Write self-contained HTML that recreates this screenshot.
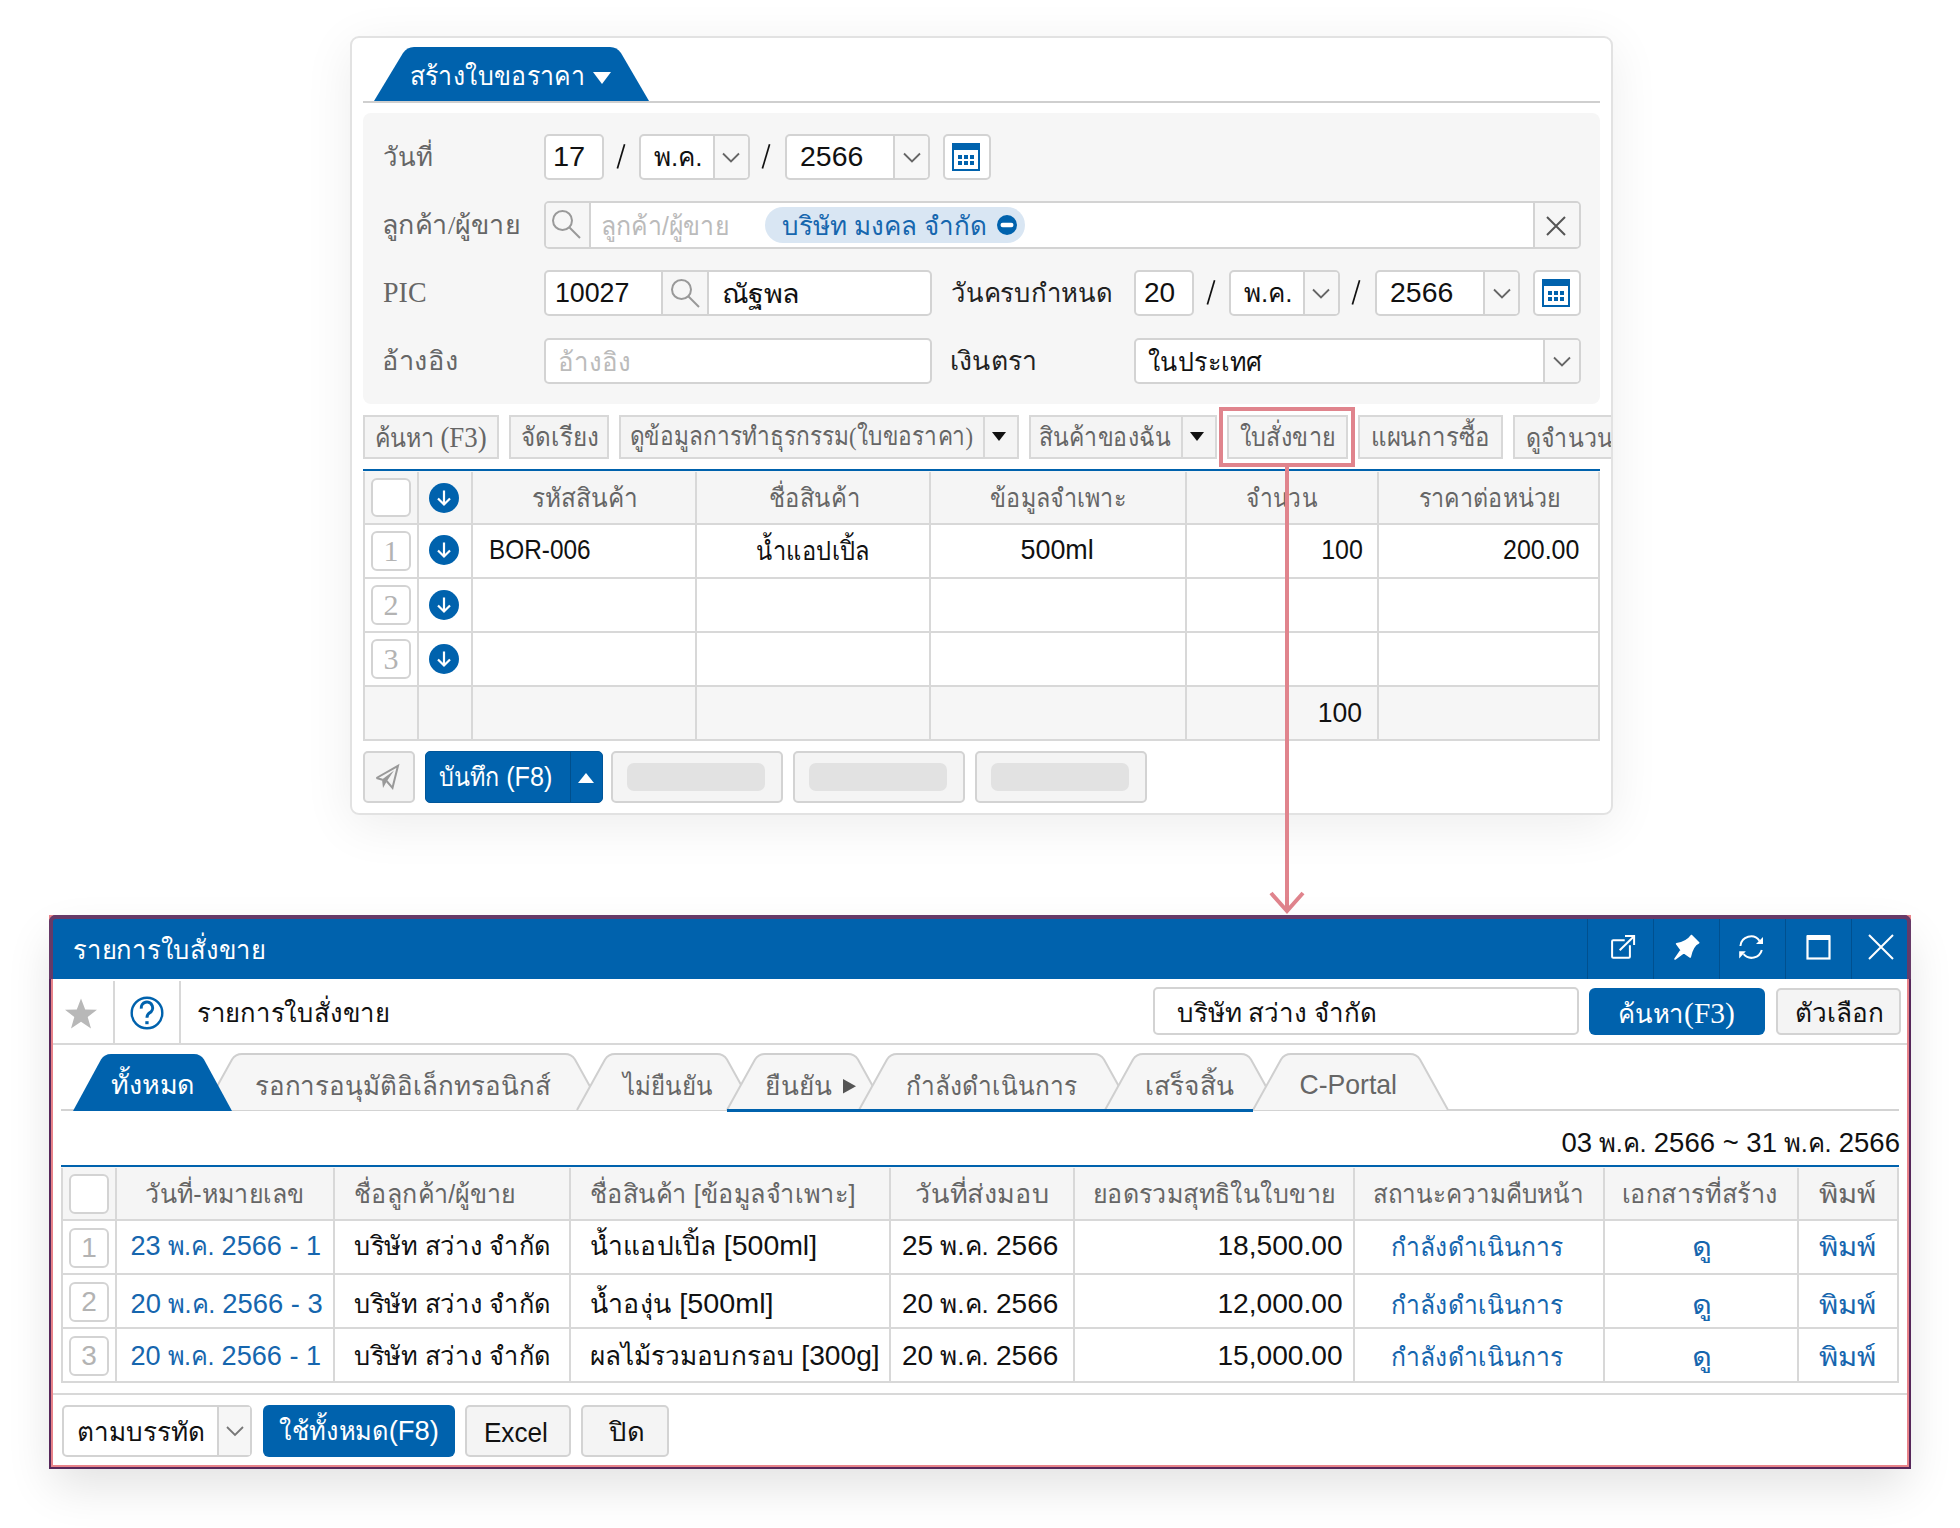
<!DOCTYPE html>
<html><head><meta charset="utf-8">
<style>
html,body{margin:0;padding:0;width:1960px;height:1528px;overflow:hidden;background:#fff;}
body{font-family:"Liberation Sans",sans-serif;font-size:26px;color:#111;position:relative;}
.a{position:absolute;box-sizing:border-box;}
.t{position:absolute;white-space:nowrap;line-height:40px;}
.L{font-size:28px;}
.s .L{font-size:30px;}
</style></head><body>
<div class="a" style="left:350px;top:36px;width:1263px;height:779px;background:#fff;border:2px solid #e2e2e2;border-radius:9px;box-shadow:0 10px 50px rgba(0,0,0,0.075);"></div>
<svg class="a" style="left:0px;top:0px" width="1960" height="120"><path d="M374,101 L403,53 Q407,47 414,47 L610,47 Q617,47 621,53 L649,101 Z" fill="#0062ad"/><rect x="363" y="101" width="1237" height="2" fill="#cfcfcf"/><path d="M593,72 L611,72 L602,84 Z" fill="#fff"/></svg>
<div class="t" id="t1" style="left:409px;top:56px;color:#fff;transform:translateX(0.70px) scaleX(0.9572);transform-origin:1.00px 50%;">สร้างใบขอราคา</div>
<div class="a" style="left:363px;top:113px;width:1237px;height:291px;background:#f6f6f6;border-radius:8px;"></div>
<div class="t s" id="t2" style="left:384px;top:138px;color:#666;font-family:'Liberation Serif',serif;transform:translateX(-1.00px) scaleX(0.9917);transform-origin:1.00px 50%;">วันที่</div>
<div class="t s" id="t3" style="left:384px;top:206px;color:#666;font-family:'Liberation Serif',serif;transform:translateX(-2.00px) scaleX(1.0308);transform-origin:2.00px 50%;">ลูกค้า/ผู้ขาย</div>
<div class="t s" id="t4" style="left:384px;top:272px;color:#666;font-family:'Liberation Serif',serif;transform:translateX(-1.00px) scaleX(0.9311);transform-origin:1.00px 50%;"><span class="L">PIC</span></div>
<div class="t s" id="t5" style="left:384px;top:342px;color:#666;font-family:'Liberation Serif',serif;transform:translateX(-2.00px) scaleX(1.0435);transform-origin:2.00px 50%;">อ้างอิง</div>
<div class="t s" id="t6" style="left:952px;top:274px;color:#222;font-family:'Liberation Serif',serif;transform:translateX(-1.00px) scaleX(0.9857);transform-origin:1.00px 50%;">วันครบกำหนด</div>
<div class="t s" id="t7" style="left:952px;top:342px;color:#222;font-family:'Liberation Serif',serif;transform:translateX(-2.00px) scaleX(1.0207);transform-origin:2.00px 50%;">เงินตรา</div>
<div class="a" style="left:544px;top:134px;width:60px;height:46px;background:#fff;border:2px solid #d3d3d3;border-radius:5px;"></div>
<div class="t" id="t8" style="left:555px;top:137px;color:#111;transform:translateX(-2.00px) scaleX(1.0357);transform-origin:2.00px 50%;"><span class="L">17</span></div>
<svg class="a" style="left:616px;top:142px" width="14" height="30"><path d="M8.6,2.2 L1.4,26.6" stroke="#111" stroke-width="1.7"/></svg>
<div class="a" style="left:639px;top:134px;width:111px;height:46px;background:#fff;border:2px solid #d3d3d3;border-radius:5px;"></div>
<div class="a" style="left:715px;top:136px;width:33px;height:42px;background:#f7f7f7;border-radius:0 3px 3px 0;"></div>
<div class="a" style="left:713px;top:136px;width:2px;height:42px;background:#d3d3d3;"></div>
<div class="t" id="t9" style="left:651px;top:137px;color:#111;transform:translateX(3.00px) scaleX(1.0000);transform-origin:0.00px 50%;">พ.ค.</div>
<svg class="a" style="left:721px;top:149px" width="22" height="18"><path d="M2,4.5 L10,12.5 L18,4.5" fill="none" stroke="#666" stroke-width="1.8"/></svg>
<svg class="a" style="left:761px;top:142px" width="14" height="30"><path d="M8.6,2.2 L1.4,26.6" stroke="#111" stroke-width="1.7"/></svg>
<div class="a" style="left:785px;top:134px;width:145px;height:46px;background:#fff;border:2px solid #d3d3d3;border-radius:5px;"></div>
<div class="a" style="left:895px;top:136px;width:33px;height:42px;background:#f7f7f7;border-radius:0 3px 3px 0;"></div>
<div class="a" style="left:893px;top:136px;width:2px;height:42px;background:#d3d3d3;"></div>
<div class="t" id="t10" style="left:800px;top:137px;color:#111;transform:translateX(0.00px) scaleX(1.0164);transform-origin:1.00px 50%;"><span class="L">2566</span></div>
<svg class="a" style="left:902px;top:149px" width="22" height="18"><path d="M2,4.5 L10,12.5 L18,4.5" fill="none" stroke="#666" stroke-width="1.8"/></svg>
<div class="a" style="left:943px;top:134px;width:48px;height:46px;background:#fff;border:2px solid #d3d3d3;border-radius:5px;"></div>
<svg class="a" style="left:952px;top:143px" width="28" height="28"><rect x="1" y="1" width="26" height="26" fill="none" stroke="#0062ad" stroke-width="2"/><rect x="1" y="1" width="26" height="6" fill="#0062ad"/><rect x="6" y="12" width="4" height="4" fill="#0062ad"/><rect x="12" y="12" width="4" height="4" fill="#0062ad"/><rect x="18" y="12" width="4" height="4" fill="#0062ad"/><rect x="6" y="18" width="4" height="4" fill="#0062ad"/><rect x="12" y="18" width="4" height="4" fill="#0062ad"/><rect x="18" y="18" width="4" height="4" fill="#0062ad"/></svg>
<div class="a" style="left:544px;top:201px;width:1037px;height:48px;background:#fff;border:2px solid #d3d3d3;border-radius:5px;"></div>
<div class="a" style="left:546px;top:203px;width:44px;height:44px;background:#f6f6f6;border-radius:3px 0 0 3px;"></div>
<div class="a" style="left:589px;top:203px;width:2px;height:44px;background:#d3d3d3;"></div>
<svg class="a" style="left:550px;top:208px" width="36" height="36"><circle cx="12.5" cy="12.5" r="9.5" fill="none" stroke="#999" stroke-width="2"/><path d="M19.5,19.5 L30,30" stroke="#999" stroke-width="2"/></svg>
<div class="t" id="t11" style="left:602px;top:206px;color:#bbb;transform:translateX(-1.20px) scaleX(0.9546);transform-origin:2.00px 50%;">ลูกค้า/ผู้ขาย</div>
<div class="a" style="left:765px;top:207px;width:260px;height:36px;background:#d9e6f3;border-radius:18px;"></div>
<div class="t" id="t12" style="left:783px;top:206px;color:#1666ae;transform:translateX(-1.00px) scaleX(1.0000);transform-origin:1.00px 50%;">บริษัท มงคล จำกัด</div>
<svg class="a" style="left:995px;top:213px" width="24" height="24"><circle cx="12" cy="12" r="10" fill="#0062ad"/><rect x="5.5" y="9.8" width="13" height="4.4" rx="2.2" fill="#fff"/></svg>
<div class="a" style="left:1533px;top:203px;width:2px;height:44px;background:#d3d3d3;"></div>
<div class="a" style="left:1535px;top:203px;width:44px;height:44px;background:#f6f6f6;border-radius:0 3px 3px 0;"></div>
<svg class="a" style="left:1545px;top:215px" width="22" height="22"><path d="M2,2 L20,20 M20,2 L2,20" stroke="#555" stroke-width="2"/></svg>
<div class="a" style="left:544px;top:270px;width:388px;height:46px;background:#fff;border:2px solid #d3d3d3;border-radius:5px;"></div>
<div class="a" style="left:662px;top:272px;width:46px;height:42px;background:#f6f6f6;"></div>
<div class="a" style="left:661px;top:272px;width:2px;height:42px;background:#d3d3d3;"></div>
<div class="a" style="left:707px;top:272px;width:2px;height:42px;background:#d3d3d3;"></div>
<svg class="a" style="left:669px;top:277px" width="36" height="36"><circle cx="12.5" cy="12.5" r="9.5" fill="none" stroke="#999" stroke-width="2"/><path d="M19.5,19.5 L30,30" stroke="#999" stroke-width="2"/></svg>
<div class="t" id="t13" style="left:556px;top:273px;color:#111;transform:translateX(-1.20px) scaleX(0.9573);transform-origin:2.00px 50%;"><span class="L">10027</span></div>
<div class="t" id="t14" style="left:724px;top:274px;color:#111;transform:translateX(-2.10px) scaleX(1.1030);transform-origin:2.00px 50%;">ณัฐพล</div>
<div class="a" style="left:1134px;top:270px;width:60px;height:46px;background:#fff;border:2px solid #d3d3d3;border-radius:5px;"></div>
<div class="t" id="t15" style="left:1145px;top:273px;color:#111;transform:translateX(-1.00px) scaleX(1.0000);transform-origin:1.00px 50%;"><span class="L">20</span></div>
<svg class="a" style="left:1206px;top:278px" width="14" height="30"><path d="M8.6,2.2 L1.4,26.6" stroke="#111" stroke-width="1.7"/></svg>
<div class="a" style="left:1229px;top:270px;width:111px;height:46px;background:#fff;border:2px solid #d3d3d3;border-radius:5px;"></div>
<div class="a" style="left:1305px;top:272px;width:33px;height:42px;background:#f7f7f7;border-radius:0 3px 3px 0;"></div>
<div class="a" style="left:1303px;top:272px;width:2px;height:42px;background:#d3d3d3;"></div>
<div class="t" id="t16" style="left:1241px;top:273px;color:#111;transform:translateX(3.00px) scaleX(1.0000);transform-origin:0.00px 50%;">พ.ค.</div>
<svg class="a" style="left:1311px;top:285px" width="22" height="18"><path d="M2,4.5 L10,12.5 L18,4.5" fill="none" stroke="#666" stroke-width="1.8"/></svg>
<svg class="a" style="left:1351px;top:278px" width="14" height="30"><path d="M8.6,2.2 L1.4,26.6" stroke="#111" stroke-width="1.7"/></svg>
<div class="a" style="left:1375px;top:270px;width:145px;height:46px;background:#fff;border:2px solid #d3d3d3;border-radius:5px;"></div>
<div class="a" style="left:1485px;top:272px;width:33px;height:42px;background:#f7f7f7;border-radius:0 3px 3px 0;"></div>
<div class="a" style="left:1483px;top:272px;width:2px;height:42px;background:#d3d3d3;"></div>
<div class="t" id="t17" style="left:1390px;top:273px;color:#111;transform:translateX(0.00px) scaleX(1.0164);transform-origin:1.00px 50%;"><span class="L">2566</span></div>
<svg class="a" style="left:1492px;top:285px" width="22" height="18"><path d="M2,4.5 L10,12.5 L18,4.5" fill="none" stroke="#666" stroke-width="1.8"/></svg>
<div class="a" style="left:1533px;top:270px;width:48px;height:46px;background:#fff;border:2px solid #d3d3d3;border-radius:5px;"></div>
<svg class="a" style="left:1542px;top:279px" width="28" height="28"><rect x="1" y="1" width="26" height="26" fill="none" stroke="#0062ad" stroke-width="2"/><rect x="1" y="1" width="26" height="6" fill="#0062ad"/><rect x="6" y="12" width="4" height="4" fill="#0062ad"/><rect x="12" y="12" width="4" height="4" fill="#0062ad"/><rect x="18" y="12" width="4" height="4" fill="#0062ad"/><rect x="6" y="18" width="4" height="4" fill="#0062ad"/><rect x="12" y="18" width="4" height="4" fill="#0062ad"/><rect x="18" y="18" width="4" height="4" fill="#0062ad"/></svg>
<div class="a" style="left:544px;top:338px;width:388px;height:46px;background:#fff;border:2px solid #d3d3d3;border-radius:5px;"></div>
<div class="t" id="t18" style="left:560px;top:342px;color:#bbb;transform:translateX(-2.00px) scaleX(0.9942);transform-origin:2.00px 50%;">อ้างอิง</div>
<div class="a" style="left:1134px;top:338px;width:447px;height:46px;background:#fff;border:2px solid #d3d3d3;border-radius:5px;"></div>
<div class="a" style="left:1545px;top:340px;width:34px;height:42px;background:#f7f7f7;border-radius:0 3px 3px 0;"></div>
<div class="a" style="left:1543px;top:340px;width:2px;height:42px;background:#d3d3d3;"></div>
<div class="t" id="t19" style="left:1149px;top:342px;color:#111;transform:translateX(-1.20px) scaleX(0.9641);transform-origin:1.00px 50%;">ในประเทศ</div>
<svg class="a" style="left:1552px;top:353px" width="22" height="18"><path d="M2,4.5 L10,12.5 L18,4.5" fill="none" stroke="#666" stroke-width="1.8"/></svg>
<div class="a" style="left:363px;top:415px;width:136px;height:44px;background:#f4f4f4;border:2px solid #d8d8d8;border-radius:0px;"></div>
<div class="t s" id="t20" style="left:376px;top:417px;color:#666;font-family:'Liberation Serif',serif;transform:translateX(-1.60px) scaleX(0.8951);transform-origin:2.00px 50%;">ค้นหา <span class="L">(F3)</span></div>
<div class="a" style="left:509px;top:415px;width:100px;height:44px;background:#f4f4f4;border:2px solid #d8d8d8;border-radius:0px;"></div>
<div class="t s" id="t21" style="left:522px;top:418px;color:#666;font-family:'Liberation Serif',serif;transform:translateX(-0.70px) scaleX(0.9313);transform-origin:1.00px 50%;">จัดเรียง</div>
<div class="a" style="left:619px;top:415px;width:400px;height:44px;background:#f4f4f4;border:2px solid #d8d8d8;border-radius:0px;"></div>
<div class="t s" id="t22" style="left:630px;top:417px;color:#666;font-family:'Liberation Serif',serif;transform:translateX(-0.50px) scaleX(0.8707);transform-origin:1.00px 50%;">ดูข้อมูลการทำธุรกรรม(ใบขอราคา)</div>
<div class="a" style="left:983px;top:417px;width:2px;height:40px;background:#d8d8d8;"></div>
<svg class="a" style="left:992px;top:432px" width="16" height="10"><path d="M0,0 L14,0 L7,9 Z" fill="#111"/></svg>
<div class="a" style="left:1029px;top:415px;width:188px;height:44px;background:#f4f4f4;border:2px solid #d8d8d8;border-radius:0px;"></div>
<div class="t s" id="t23" style="left:1040px;top:418px;color:#666;font-family:'Liberation Serif',serif;transform:translateX(-1.00px) scaleX(0.8851);transform-origin:1.00px 50%;">สินค้าของฉัน</div>
<div class="a" style="left:1181px;top:417px;width:2px;height:40px;background:#d8d8d8;"></div>
<svg class="a" style="left:1190px;top:432px" width="16" height="10"><path d="M0,0 L14,0 L7,9 Z" fill="#111"/></svg>
<div class="a" style="left:1227px;top:415px;width:121px;height:44px;background:#f4f4f4;border:2px solid #d8d8d8;border-radius:0px;"></div>
<div class="t s" id="t24" style="left:1240px;top:418px;color:#666;font-family:'Liberation Serif',serif;transform:translateX(-0.50px) scaleX(0.8952);transform-origin:1.00px 50%;">ใบสั่งขาย</div>
<div class="a" style="left:1358px;top:415px;width:145px;height:44px;background:#f4f4f4;border:2px solid #d8d8d8;border-radius:0px;"></div>
<div class="t s" id="t25" style="left:1372px;top:418px;color:#666;font-family:'Liberation Serif',serif;transform:translateX(-1.20px) scaleX(0.9216);transform-origin:2.00px 50%;">แผนการซื้อ</div>
<div class="a" style="left:1513px;top:415px;width:98px;height:44px;overflow:hidden;">
<div class="a" style="left:0;top:0;width:140px;height:44px;background:#f4f4f4;border:2px solid #d8d8d8;"></div>
<div class="t" style="left:13px;top:4px;color:#666;font-family:'Liberation Serif',serif;transform:scaleX(0.89);transform-origin:0 50%;">ดูจำนวน</div>
</div>
<div class="a" style="left:1219px;top:407px;width:136px;height:60px;border:4px solid #e0848d;"></div>
<div class="a" style="left:363px;top:469px;width:1237px;height:2px;background:#0062ad;"></div>
<div class="a" style="left:363px;top:471px;width:1237px;height:53px;background:#f5f5f5;"></div>
<div class="a" style="left:363px;top:686px;width:1237px;height:54px;background:#f6f6f6;"></div>
<div class="a" style="left:363px;top:523px;width:1237px;height:2px;background:#d8d8d8;"></div>
<div class="a" style="left:363px;top:577px;width:1237px;height:2px;background:#d8d8d8;"></div>
<div class="a" style="left:363px;top:631px;width:1237px;height:2px;background:#d8d8d8;"></div>
<div class="a" style="left:363px;top:685px;width:1237px;height:2px;background:#d8d8d8;"></div>
<div class="a" style="left:363px;top:739px;width:1237px;height:2px;background:#d8d8d8;"></div>
<div class="a" style="left:363px;top:472px;width:2px;height:269px;background:#d8d8d8;"></div>
<div class="a" style="left:417px;top:472px;width:2px;height:269px;background:#d8d8d8;"></div>
<div class="a" style="left:471px;top:472px;width:2px;height:269px;background:#d8d8d8;"></div>
<div class="a" style="left:695px;top:472px;width:2px;height:269px;background:#d8d8d8;"></div>
<div class="a" style="left:929px;top:472px;width:2px;height:269px;background:#d8d8d8;"></div>
<div class="a" style="left:1185px;top:472px;width:2px;height:269px;background:#d8d8d8;"></div>
<div class="a" style="left:1377px;top:472px;width:2px;height:269px;background:#d8d8d8;"></div>
<div class="a" style="left:1598px;top:472px;width:2px;height:269px;background:#d8d8d8;"></div>
<div class="a" style="left:371px;top:478px;width:40px;height:39px;background:#fff;border:2px solid #d3d3d3;border-radius:6px;"></div>
<div class="a" style="left:371px;top:531px;width:40px;height:40px;background:#fff;border:2px solid #d3d3d3;border-radius:6px;"></div>
<div class="t s" id="t26" style="left:371px;width:40px;text-align:center;top:531px;color:#b3b3b3;font-family:'Liberation Serif',serif;"><span class="L">1</span></div>
<div class="a" style="left:371px;top:585px;width:40px;height:40px;background:#fff;border:2px solid #d3d3d3;border-radius:6px;"></div>
<div class="t s" id="t27" style="left:371px;width:40px;text-align:center;top:585px;color:#b3b3b3;font-family:'Liberation Serif',serif;"><span class="L">2</span></div>
<div class="a" style="left:371px;top:639px;width:40px;height:40px;background:#fff;border:2px solid #d3d3d3;border-radius:6px;"></div>
<div class="t s" id="t28" style="left:371px;width:40px;text-align:center;top:639px;color:#b3b3b3;font-family:'Liberation Serif',serif;"><span class="L">3</span></div>
<svg class="a" style="left:429px;top:483px" width="30" height="30"><circle cx="15" cy="15" r="15" fill="#0062ad"/><path d="M15,7.5 L15,21.5 M9,15.5 L15,21.5 L21,15.5" fill="none" stroke="#fff" stroke-width="2.2"/></svg>
<svg class="a" style="left:429px;top:535px" width="30" height="30"><circle cx="15" cy="15" r="15" fill="#0062ad"/><path d="M15,7.5 L15,21.5 M9,15.5 L15,21.5 L21,15.5" fill="none" stroke="#fff" stroke-width="2.2"/></svg>
<svg class="a" style="left:429px;top:590px" width="30" height="30"><circle cx="15" cy="15" r="15" fill="#0062ad"/><path d="M15,7.5 L15,21.5 M9,15.5 L15,21.5 L21,15.5" fill="none" stroke="#fff" stroke-width="2.2"/></svg>
<svg class="a" style="left:429px;top:644px" width="30" height="30"><circle cx="15" cy="15" r="15" fill="#0062ad"/><path d="M15,7.5 L15,21.5 M9,15.5 L15,21.5 L21,15.5" fill="none" stroke="#fff" stroke-width="2.2"/></svg>
<div class="t s" id="t29" style="left:473px;width:222px;text-align:center;top:479px;color:#666;font-family:'Liberation Serif',serif;transform:translateX(4.60px) scaleX(0.9364);transform-origin:56.00px 50%;">รหัสสินค้า</div>
<div class="t s" id="t30" style="left:697px;width:232px;text-align:center;top:479px;color:#666;font-family:'Liberation Serif',serif;transform:translateX(5.60px) scaleX(0.9155);transform-origin:67.00px 50%;">ชื่อสินค้า</div>
<div class="t s" id="t31" style="left:931px;width:254px;text-align:center;top:479px;color:#666;font-family:'Liberation Serif',serif;transform:translateX(8.00px) scaleX(0.8973);transform-origin:52.00px 50%;">ข้อมูลจำเพาะ</div>
<div class="t s" id="t32" style="left:1187px;width:190px;text-align:center;top:479px;color:#666;font-family:'Liberation Serif',serif;transform:translateX(4.80px) scaleX(0.8738);transform-origin:56.00px 50%;">จำนวน</div>
<div class="t s" id="t33" style="left:1379px;width:219px;text-align:center;top:479px;color:#666;font-family:'Liberation Serif',serif;transform:translateX(9.40px) scaleX(0.8949);transform-origin:31.00px 50%;">ราคาต่อหน่วย</div>
<div class="t" id="t34" style="left:490px;top:530px;color:#111;transform:translateX(-1.30px) scaleX(0.8711);transform-origin:2.00px 50%;"><span class="L">BOR-006</span></div>
<div class="t" id="t35" style="left:697px;width:232px;text-align:center;top:531px;color:#111;transform:translateX(5.60px) scaleX(0.9098);transform-origin:55.00px 50%;">น้ำแอปเปิ้ล</div>
<div class="t" id="t36" style="left:931px;width:254px;text-align:center;top:530px;color:#111;transform:translateX(0.60px) scaleX(0.9595);transform-origin:90.00px 50%;"><span class="L">500ml</span></div>
<div class="t" id="t37" style="left:1187px;width:176px;text-align:right;top:530px;color:#111;transform:translateX(4.70px) scaleX(0.8932);transform-origin:131.00px 50%;"><span class="L">100</span></div>
<div class="t" id="t38" style="left:1379px;width:200px;text-align:right;top:530px;color:#111;transform:translateX(9.60px) scaleX(0.8917);transform-origin:115.00px 50%;"><span class="L">200.00</span></div>
<div class="t" id="t39" style="left:1187px;width:176px;text-align:right;top:693px;color:#111;transform:translateX(1.30px) scaleX(0.9477);transform-origin:131.00px 50%;"><span class="L">100</span></div>
<div class="a" style="left:363px;top:751px;width:52px;height:52px;background:#f4f4f4;border:2px solid #d3d3d3;border-radius:5px;"></div>
<svg class="a" style="left:375px;top:763px" width="28" height="28"><path d="M1.5,15 L23,2.8 L17.5,24.8 L11.6,18" fill="none" stroke="#999" stroke-width="2"/><path d="M1.5,15 L7.5,16.8" stroke="#999" stroke-width="2"/><path d="M7,16.5 L19,7.5 L11.8,18.2 L8,25 Z" fill="#999"/></svg>
<div class="a" style="left:425px;top:751px;width:178px;height:52px;background:#0062ad;border:1px solid #00569a;border-radius:5px;"></div>
<div class="a" style="left:570px;top:752px;width:1px;height:50px;background:#004f8c;"></div>
<div class="t" id="t40" style="left:439px;top:757px;color:#fff;transform:translateX(-0.50px) scaleX(0.8984);transform-origin:1.00px 50%;">บันทึก <span class="L">(F8)</span></div>
<svg class="a" style="left:577px;top:771px" width="18" height="14"><path d="M1,12 L9,2 L17,12 Z" fill="#fff"/></svg>
<div class="a" style="left:611px;top:751px;width:172px;height:52px;background:#f4f4f4;border:2px solid #d3d3d3;border-radius:5px;"></div>
<div class="a" style="left:627px;top:763px;width:138px;height:28px;background:#e2e2e2;border-radius:7px;"></div>
<div class="a" style="left:793px;top:751px;width:172px;height:52px;background:#f4f4f4;border:2px solid #d3d3d3;border-radius:5px;"></div>
<div class="a" style="left:809px;top:763px;width:138px;height:28px;background:#e2e2e2;border-radius:7px;"></div>
<div class="a" style="left:975px;top:751px;width:172px;height:52px;background:#f4f4f4;border:2px solid #d3d3d3;border-radius:5px;"></div>
<div class="a" style="left:991px;top:763px;width:138px;height:28px;background:#e2e2e2;border-radius:7px;"></div>
<svg class="a" style="left:1260px;top:466px" width="60" height="452"><path d="M27,0 L27,446" stroke="#e0848d" stroke-width="4"/><path d="M11,427 L27,445 L43,427" fill="none" stroke="#e0848d" stroke-width="4"/></svg>
<div class="a" style="left:49px;top:915px;width:1862px;height:554px;background:#fff;box-shadow:0 20px 44px -4px rgba(0,0,0,0.12);"></div>
<div class="a" style="left:49px;top:915px;width:1862px;height:554px;background:transparent;border:4px solid #e8838a;"></div>
<div class="a" style="left:49px;top:915px;width:1862px;height:554px;background:transparent;border:2px solid #56275a;border-radius:7px 7px 0 0;"></div>
<div class="a" style="left:49px;top:915px;width:1862px;height:64px;background:#0062ad;border:4px solid #663a68;border-bottom:none;border-radius:7px 7px 0 0;"></div>
<div class="t" id="t41" style="left:74px;top:930px;color:#fff;transform:translateX(-1.00px) scaleX(0.9834);transform-origin:1.00px 50%;">รายการใบสั่งขาย</div>
<div class="a" style="left:1587px;top:919px;width:1px;height:60px;background:#00508f;"></div>
<div class="a" style="left:1653px;top:919px;width:1px;height:60px;background:#00508f;"></div>
<div class="a" style="left:1719px;top:919px;width:1px;height:60px;background:#00508f;"></div>
<div class="a" style="left:1785px;top:919px;width:1px;height:60px;background:#00508f;"></div>
<div class="a" style="left:1851px;top:919px;width:1px;height:60px;background:#00508f;"></div>
<svg class="a" style="left:1600px;top:925px" width="300" height="44">
  <path d="M24.7,15.2 L13.2,15.2 Q12.1,15.2 12.1,16.3 L12.1,31.7 Q12.1,32.8 13.2,32.8 L28.8,32.8 Q29.9,32.8 29.9,31.7 L29.9,20.3" fill="none" stroke="#fff" stroke-width="2"/>
  <path d="M19.7,25.3 L33.3,12" fill="none" stroke="#fff" stroke-width="2"/>
  <path d="M25,11 L34.1,11 L34.1,20" fill="none" stroke="#fff" stroke-width="2"/>
  <g transform="translate(64,0)">
    <path d="M27.5,10.5 L34.7,17.7 Q28.5,20.5 26.2,32 L19.8,27.6 L11,34 L17.2,25 L12.6,18.8 Q22.5,17.5 27.5,10.5 Z" fill="#fff" stroke="#fff" stroke-width="1.6" stroke-linejoin="round"/>
    <path d="M11,34 L19.8,27.6 L17.2,25 Z" fill="#fff"/>
  </g>
  <g transform="translate(130,0)">
    <path d="M10.4,21 A10.6,10.6 0 0 1 29.5,15.8" fill="none" stroke="#fff" stroke-width="2"/>
    <path d="M33,12 L33,19.1 L26,19.1 Z" fill="#fff"/>
    <path d="M31.8,25 A10.6,10.6 0 0 1 13.6,29.2" fill="none" stroke="#fff" stroke-width="2"/>
    <path d="M9.2,26.2 L15.8,26.2 L9.2,33.6 Z" fill="#fff"/>
  </g>
  <g transform="translate(196,0)">
    <rect x="11.5" y="11.5" width="22" height="22" fill="none" stroke="#fff" stroke-width="2.2"/>
    <rect x="11" y="10" width="23" height="5" fill="#fff"/>
  </g>
  <g transform="translate(258,0)">
    <path d="M11,10 L35,34 M35,10 L11,34" stroke="#fff" stroke-width="2"/>
  </g></svg>
<div class="a" style="left:113px;top:981px;width:2px;height:63px;background:#d8d8d8;"></div>
<div class="a" style="left:179px;top:981px;width:2px;height:63px;background:#d8d8d8;"></div>
<div class="a" style="left:53px;top:1043px;width:1854px;height:2px;background:#d8d8d8;"></div>
<svg class="a" style="left:64px;top:997px" width="34" height="34"><path d="M17,1.5 L21.2,12.5 L33,12.8 L23.7,20 L27,31.5 L17,24.8 L7,31.5 L10.3,20 L1,12.8 L12.8,12.5 Z" fill="#b8b8b8"/></svg>
<svg class="a" style="left:129px;top:995px" width="36" height="36"><circle cx="18" cy="18" r="15.3" fill="none" stroke="#0062ad" stroke-width="2.4"/><path d="M12.3,13.6 A5.7,5.7 0 1 1 20.6,17.8 Q18,19.5 18,22.8" fill="none" stroke="#0062ad" stroke-width="3"/><rect x="16.3" y="26.2" width="3.3" height="3" fill="#0062ad"/></svg>
<div class="t s" id="t42" style="left:197px;top:994px;color:#111;font-family:'Liberation Serif',serif;transform:translateX(-0.30px) scaleX(0.9855);transform-origin:1.00px 50%;">รายการใบสั่งขาย</div>
<div class="a" style="left:1153px;top:987px;width:426px;height:48px;background:#fff;border:2px solid #d3d3d3;border-radius:5px;"></div>
<div class="t s" id="t43" style="left:1178px;top:994px;color:#111;font-family:'Liberation Serif',serif;transform:translateX(-1.00px) scaleX(0.9980);transform-origin:1.00px 50%;">บริษัท สว่าง จำกัด</div>
<div class="a" style="left:1589px;top:988px;width:176px;height:47px;background:#0062ad;border-radius:6px;"></div>
<div class="t s" id="t44" style="left:1589px;width:176px;text-align:center;top:993px;color:#fff;font-family:'Liberation Serif',serif;transform:translateX(0.50px) scaleX(0.9835);transform-origin:31.00px 50%;">ค้นหา<span class="L">(F3)</span></div>
<div class="a" style="left:1776px;top:988px;width:125px;height:47px;background:#f4f4f4;border:2px solid #d3d3d3;border-radius:5px;"></div>
<div class="t s" id="t45" style="left:1776px;width:125px;text-align:center;top:994px;color:#111;font-family:'Liberation Serif',serif;transform:translateX(1.00px) scaleX(1.0059);transform-origin:20.00px 50%;">ตัวเลือก</div>
<svg class="a" style="left:0px;top:1040px" width="1960" height="80"><rect x="61" y="69" width="1838" height="2" fill="#d3d3d3"/><path d="M204.0,70 L232.0,19.5 Q235.5,14 242.0,14 L565.0,14 Q571.5,14 575.0,19.5 L603.0,70" fill="#f6f6f6" stroke="#cfcfcf" stroke-width="2"/><path d="M577.0,70 L605.0,19.5 Q608.5,14 615.0,14 L717.0,14 Q723.5,14 727.0,19.5 L755.0,70" fill="#f6f6f6" stroke="#cfcfcf" stroke-width="2"/><path d="M727.0,70 L755.0,19.5 Q758.5,14 765.0,14 L848.0,14 Q854.5,14 858.0,19.5 L886.0,70" fill="#f6f6f6" stroke="#cfcfcf" stroke-width="2"/><path d="M859.0,70 L887.0,19.5 Q890.5,14 897.0,14 L1094.0,14 Q1100.5,14 1104.0,19.5 L1132.0,70" fill="#f6f6f6" stroke="#cfcfcf" stroke-width="2"/><path d="M1105.0,70 L1133.0,19.5 Q1136.5,14 1143.0,14 L1241.0,14 Q1247.5,14 1251.0,19.5 L1279.0,70" fill="#f6f6f6" stroke="#cfcfcf" stroke-width="2"/><path d="M1253.0,70 L1281.0,19.5 Q1284.5,14 1291.0,14 L1410.0,14 Q1416.5,14 1420.0,19.5 L1448.0,70" fill="#f6f6f6" stroke="#cfcfcf" stroke-width="2"/><path d="M73,71 L101,19.5 Q104.5,14 111,14 L194,14 Q200.5,14 204,19.5 L232,71 Z" fill="#0062ad"/><rect x="727" y="69" width="526" height="3" fill="#0062ad"/><path d="M843,39 L856,46.2 L843,53.5 Z" fill="#555"/></svg>
<div class="t" id="t46" style="left:111px;top:1065px;color:#fff;transform:translateX(0.30px) scaleX(1.0342);transform-origin:0.00px 50%;">ทั้งหมด</div>
<div class="t" id="t47" style="left:256px;top:1066px;color:#666;transform:translateX(-1.40px) scaleX(0.9970);transform-origin:1.00px 50%;">รอการอนุมัติอิเล็กทรอนิกส์</div>
<div class="t" id="t48" style="left:621px;top:1066px;color:#666;transform:translateX(2.60px) scaleX(0.9265);transform-origin:-2.00px 50%;">ไม่ยืนยัน</div>
<div class="t" id="t49" style="left:766px;top:1066px;color:#666;transform:translateX(-0.50px) scaleX(1.0046);transform-origin:1.00px 50%;">ยืนยัน</div>
<div class="t" id="t50" style="left:906px;top:1066px;color:#666;transform:translateX(-0.50px) scaleX(0.9420);transform-origin:1.00px 50%;">กำลังดำเนินการ</div>
<div class="t" id="t51" style="left:1147px;top:1066px;color:#666;transform:translateX(-2.00px) scaleX(1.0116);transform-origin:2.00px 50%;">เสร็จสิ้น</div>
<div class="t" id="t52" style="left:1300px;top:1065px;color:#666;transform:translateX(-0.60px) scaleX(0.9500);transform-origin:1.00px 50%;"><span class="L">C-Portal</span></div>
<div class="t" id="t53" style="left:500px;width:1399px;text-align:right;top:1123px;color:#111;transform:translateX(7.00px) scaleX(0.9825);transform-origin:1055.00px 50%;"><span class="L">03</span> พ.ค. <span class="L">2566 ~ 31</span> พ.ค. <span class="L">2566</span></div>
<div class="a" style="left:61px;top:1165px;width:1838px;height:2px;background:#0062ad;"></div>
<div class="a" style="left:61px;top:1167px;width:1838px;height:53px;background:#f5f5f5;"></div>
<div class="a" style="left:61px;top:1219px;width:1838px;height:2px;background:#d8d8d8;"></div>
<div class="a" style="left:61px;top:1273px;width:1838px;height:2px;background:#d8d8d8;"></div>
<div class="a" style="left:61px;top:1327px;width:1838px;height:2px;background:#d8d8d8;"></div>
<div class="a" style="left:61px;top:1381px;width:1838px;height:2px;background:#d8d8d8;"></div>
<div class="a" style="left:61px;top:1168px;width:2px;height:215px;background:#d8d8d8;"></div>
<div class="a" style="left:115px;top:1168px;width:2px;height:215px;background:#d8d8d8;"></div>
<div class="a" style="left:333px;top:1168px;width:2px;height:215px;background:#d8d8d8;"></div>
<div class="a" style="left:569px;top:1168px;width:2px;height:215px;background:#d8d8d8;"></div>
<div class="a" style="left:889px;top:1168px;width:2px;height:215px;background:#d8d8d8;"></div>
<div class="a" style="left:1073px;top:1168px;width:2px;height:215px;background:#d8d8d8;"></div>
<div class="a" style="left:1353px;top:1168px;width:2px;height:215px;background:#d8d8d8;"></div>
<div class="a" style="left:1603px;top:1168px;width:2px;height:215px;background:#d8d8d8;"></div>
<div class="a" style="left:1797px;top:1168px;width:2px;height:215px;background:#d8d8d8;"></div>
<div class="a" style="left:1897px;top:1168px;width:2px;height:215px;background:#d8d8d8;"></div>
<div class="a" style="left:69px;top:1174px;width:40px;height:40px;background:#fff;border:2px solid #d3d3d3;border-radius:6px;"></div>
<div class="a" style="left:69px;top:1228px;width:40px;height:40px;background:#fff;border:2px solid #d3d3d3;border-radius:6px;"></div>
<div class="t" id="t54" style="left:69px;width:40px;text-align:center;top:1228px;color:#b3b3b3;"><span class="L">1</span></div>
<div class="a" style="left:69px;top:1282px;width:40px;height:40px;background:#fff;border:2px solid #d3d3d3;border-radius:6px;"></div>
<div class="t" id="t55" style="left:69px;width:40px;text-align:center;top:1282px;color:#b3b3b3;"><span class="L">2</span></div>
<div class="a" style="left:69px;top:1336px;width:40px;height:40px;background:#fff;border:2px solid #d3d3d3;border-radius:6px;"></div>
<div class="t" id="t56" style="left:69px;width:40px;text-align:center;top:1336px;color:#b3b3b3;"><span class="L">3</span></div>
<div class="t" id="t57" style="left:117px;width:216px;text-align:center;top:1174px;color:#666;transform:translateX(3.00px) scaleX(0.9626);transform-origin:26.00px 50%;">วันที่-หมายเลข</div>
<div class="t" id="t58" style="left:355px;top:1174px;color:#666;transform:translateX(-1.00px) scaleX(0.9618);transform-origin:1.00px 50%;">ชื่อลูกค้า/ผู้ขาย</div>
<div class="t" id="t59" style="left:590px;top:1174px;color:#666;transform:translateX(-0.40px) scaleX(0.9716);transform-origin:1.00px 50%;">ชื่อสินค้า [ข้อมูลจำเพาะ]</div>
<div class="t" id="t60" style="left:891px;width:182px;text-align:center;top:1174px;color:#666;transform:translateX(-2.00px) scaleX(1.0381);transform-origin:28.00px 50%;">วันที่ส่งมอบ</div>
<div class="t" id="t61" style="left:1075px;width:278px;text-align:center;top:1174px;color:#666;transform:translateX(4.70px) scaleX(0.9629);transform-origin:15.00px 50%;">ยอดรวมสุทธิในใบขาย</div>
<div class="t" id="t62" style="left:1355px;width:248px;text-align:center;top:1174px;color:#666;transform:translateX(7.00px) scaleX(0.9312);transform-origin:12.00px 50%;">สถานะความคืบหน้า</div>
<div class="t" id="t63" style="left:1605px;width:192px;text-align:center;top:1174px;color:#666;transform:translateX(1.00px) scaleX(0.9707);transform-origin:18.00px 50%;">เอกสารที่สร้าง</div>
<div class="t" id="t64" style="left:1799px;width:98px;text-align:center;top:1174px;color:#666;transform:translateX(-3.70px) scaleX(1.1240);transform-origin:24.00px 50%;">พิมพ์</div>
<div class="t" id="t65" style="left:131px;top:1226px;color:#1666ae;transform:translateX(-0.60px) scaleX(0.9687);transform-origin:1.00px 50%;"><span class="L">23</span> พ.ค. <span class="L">2566 - 1</span></div>
<div class="t" id="t66" style="left:355px;top:1226px;color:#111;transform:translateX(-0.80px) scaleX(0.9763);transform-origin:1.00px 50%;">บริษัท สว่าง จำกัด</div>
<div class="t" id="t67" style="left:590px;top:1226px;color:#111;transform:translateX(-0.40px) scaleX(1.0154);transform-origin:1.00px 50%;">น้ำแอปเปิ้ล <span class="L">[500ml]</span></div>
<div class="t" id="t68" style="left:903px;top:1226px;color:#111;transform:translateX(-1.10px) scaleX(1.0006);transform-origin:1.00px 50%;"><span class="L">25</span> พ.ค. <span class="L">2566</span></div>
<div class="t" id="t69" style="left:1075px;width:267px;text-align:right;top:1226px;color:#111;transform:translateX(0.00px) scaleX(1.0049);transform-origin:144.00px 50%;"><span class="L">18,500.00</span></div>
<div class="t" id="t70" style="left:1355px;width:248px;text-align:center;top:1227px;color:#1666ae;transform:translateX(2.80px) scaleX(0.9481);transform-origin:34.00px 50%;">กำลังดำเนินการ</div>
<div class="t" id="t71" style="left:1605px;width:192px;text-align:center;top:1227px;color:#1666ae;transform:translateX(-0.50px) scaleX(1.1786);transform-origin:89.00px 50%;">ดู</div>
<div class="t" id="t72" style="left:1799px;width:98px;text-align:center;top:1227px;color:#1666ae;transform:translateX(-3.70px) scaleX(1.1240);transform-origin:24.00px 50%;">พิมพ์</div>
<div class="t" id="t73" style="left:131px;top:1284px;color:#1666ae;transform:translateX(-0.60px) scaleX(0.9764);transform-origin:1.00px 50%;"><span class="L">20</span> พ.ค. <span class="L">2566 - 3</span></div>
<div class="t" id="t74" style="left:355px;top:1284px;color:#111;transform:translateX(-0.80px) scaleX(0.9763);transform-origin:1.00px 50%;">บริษัท สว่าง จำกัด</div>
<div class="t" id="t75" style="left:590px;top:1284px;color:#111;transform:translateX(-0.40px) scaleX(1.0273);transform-origin:1.00px 50%;">น้ำองุ่น <span class="L">[500ml]</span></div>
<div class="t" id="t76" style="left:903px;top:1284px;color:#111;transform:translateX(-1.10px) scaleX(1.0006);transform-origin:1.00px 50%;"><span class="L">20</span> พ.ค. <span class="L">2566</span></div>
<div class="t" id="t77" style="left:1075px;width:267px;text-align:right;top:1284px;color:#111;transform:translateX(0.00px) scaleX(1.0049);transform-origin:144.00px 50%;"><span class="L">12,000.00</span></div>
<div class="t" id="t78" style="left:1355px;width:248px;text-align:center;top:1285px;color:#1666ae;transform:translateX(2.80px) scaleX(0.9481);transform-origin:34.00px 50%;">กำลังดำเนินการ</div>
<div class="t" id="t79" style="left:1605px;width:192px;text-align:center;top:1285px;color:#1666ae;transform:translateX(-0.50px) scaleX(1.1786);transform-origin:89.00px 50%;">ดู</div>
<div class="t" id="t80" style="left:1799px;width:98px;text-align:center;top:1285px;color:#1666ae;transform:translateX(-3.70px) scaleX(1.1240);transform-origin:24.00px 50%;">พิมพ์</div>
<div class="t" id="t81" style="left:131px;top:1336px;color:#1666ae;transform:translateX(-0.60px) scaleX(0.9687);transform-origin:1.00px 50%;"><span class="L">20</span> พ.ค. <span class="L">2566 - 1</span></div>
<div class="t" id="t82" style="left:355px;top:1336px;color:#111;transform:translateX(-0.80px) scaleX(0.9763);transform-origin:1.00px 50%;">บริษัท สว่าง จำกัด</div>
<div class="t" id="t83" style="left:590px;top:1336px;color:#111;transform:translateX(-0.40px) scaleX(1.0070);transform-origin:1.00px 50%;">ผลไม้รวมอบกรอบ <span class="L">[300g]</span></div>
<div class="t" id="t84" style="left:903px;top:1336px;color:#111;transform:translateX(-1.10px) scaleX(1.0006);transform-origin:1.00px 50%;"><span class="L">20</span> พ.ค. <span class="L">2566</span></div>
<div class="t" id="t85" style="left:1075px;width:267px;text-align:right;top:1336px;color:#111;transform:translateX(0.00px) scaleX(1.0049);transform-origin:144.00px 50%;"><span class="L">15,000.00</span></div>
<div class="t" id="t86" style="left:1355px;width:248px;text-align:center;top:1337px;color:#1666ae;transform:translateX(2.80px) scaleX(0.9481);transform-origin:34.00px 50%;">กำลังดำเนินการ</div>
<div class="t" id="t87" style="left:1605px;width:192px;text-align:center;top:1337px;color:#1666ae;transform:translateX(-0.50px) scaleX(1.1786);transform-origin:89.00px 50%;">ดู</div>
<div class="t" id="t88" style="left:1799px;width:98px;text-align:center;top:1337px;color:#1666ae;transform:translateX(-3.70px) scaleX(1.1240);transform-origin:24.00px 50%;">พิมพ์</div>
<div class="a" style="left:53px;top:1393px;width:1854px;height:2px;background:#d8d8d8;"></div>
<div class="a" style="left:62px;top:1405px;width:190px;height:52px;background:#fff;border:2px solid #d3d3d3;border-radius:5px;"></div>
<div class="a" style="left:217px;top:1407px;width:2px;height:48px;background:#d3d3d3;"></div>
<div class="a" style="left:219px;top:1407px;width:31px;height:48px;background:#f6f6f6;"></div>
<div class="t" id="t89" style="left:78px;top:1412px;color:#111;transform:translateX(-1.30px) scaleX(1.0048);transform-origin:2.00px 50%;">ตามบรรทัด</div>
<svg class="a" style="left:224px;top:1423px" width="22" height="18"><path d="M3,4 L11,12 L19,4" fill="none" stroke="#777" stroke-width="1.8"/></svg>
<div class="a" style="left:263px;top:1405px;width:192px;height:52px;background:#0062ad;border-radius:6px;"></div>
<div class="t" id="t90" style="left:263px;width:192px;text-align:center;top:1411px;color:#fff;transform:translateX(1.70px) scaleX(0.9789);transform-origin:15.00px 50%;">ใช้ทั้งหมด<span class="L">(F8)</span></div>
<div class="a" style="left:465px;top:1405px;width:106px;height:52px;background:#f4f4f4;border:2px solid #d3d3d3;border-radius:5px;"></div>
<div class="t" id="t91" style="left:465px;width:106px;text-align:center;top:1413px;color:#111;transform:translateX(0.00px) scaleX(0.9338);transform-origin:21.00px 50%;"><span class="L">Excel</span></div>
<div class="a" style="left:581px;top:1405px;width:88px;height:52px;background:#f4f4f4;border:2px solid #d3d3d3;border-radius:5px;"></div>
<div class="t" id="t92" style="left:581px;width:88px;text-align:center;top:1412px;color:#111;transform:translateX(1.00px) scaleX(1.0531);transform-origin:27.00px 50%;">ปิด</div>
</body></html>
